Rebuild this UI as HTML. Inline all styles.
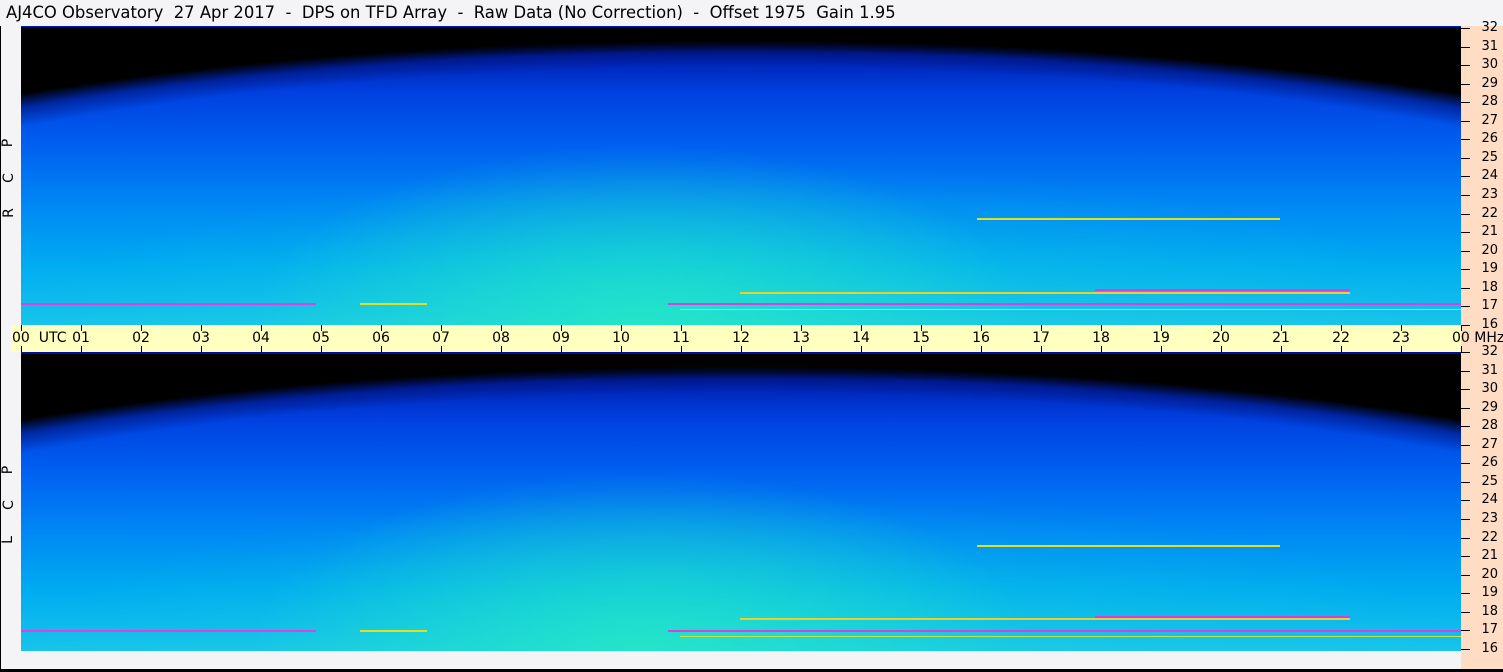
<!DOCTYPE html>
<html><head><meta charset="utf-8"><style>
body{margin:0;width:1503px;height:672px;overflow:hidden;background:#f4f4f6;font-family:"DejaVu Sans","Liberation Sans",sans-serif;position:relative}
.t{position:absolute;left:6px;top:3px;font-size:16.4px;color:#000;white-space:pre}
.p{position:absolute;left:21px;width:1440px;height:299px;
background:
radial-gradient(ellipse 520px 240px at 620px 100%, rgba(40,240,190,.7), transparent 75%),
radial-gradient(ellipse 900px 200px at 720px 100%, rgba(30,220,210,.4), transparent 80%),
radial-gradient(ellipse 1300px 300px at 720px 100%, transparent 86%, rgba(0,20,120,.6) 91%, #000 95%),
linear-gradient(to bottom,#000 0,#000 4%,#0020b0 10%,#0040e0 22%,#0060f0 40%,#0088f4 60%,#00acf0 80%,#18c4ea 100%);}
.r{position:absolute;left:1461px;top:26px;width:42px;height:644px;background:#ffdcc4}
.band{position:absolute;left:11px;top:325px;width:1450px;height:27px;background:#ffffc0}
.ln{position:absolute;height:2px}
.fl{position:absolute;left:1474px;font-size:13px;line-height:14px;width:24px;text-align:right}
.ft{position:absolute;left:1461px;width:9px;height:1px;background:#000}
.tl{position:absolute;top:330px;font-size:14px;line-height:16px;width:30px;text-align:center;margin-left:-15px;white-space:nowrap}
.tt{position:absolute;width:1px;height:6px;background:#000}
.side{position:absolute;left:4px;font-size:14px;line-height:14px;transform:rotate(-90deg)}
.bord{position:absolute;left:0;top:669px;width:1503px;height:3px;background:#000}
</style></head><body>
<div class="t">AJ4CO Observatory  27 Apr 2017  -  DPS on TFD Array  -  Raw Data (No Correction)  -  Offset 1975  Gain 1.95</div>
<div class="r"></div>
<div class="p" style="top:26px"></div>
<div class="p" style="top:352px"></div>
<div class="band"></div>
<div style="position:absolute;left:21px;top:352px;width:1440px;height:2px;background:#0010a0"></div>
<div style="position:absolute;left:21px;top:26px;width:1440px;height:1px;background:#0020c0"></div>
<div class="ln" style="left:21px;top:303px;width:295px;background:#e040e0"></div>
<div class="ln" style="left:360px;top:303px;width:67px;background:#e0e020"></div>
<div class="ln" style="left:668px;top:303px;width:793px;background:#d840e0"></div>
<div class="ln" style="left:740px;top:292px;width:610px;background:#e8d030"></div>
<div class="ln" style="left:1095px;top:289px;width:255px;background:#d040e8"></div>
<div class="ln" style="left:977px;top:218px;width:303px;background:#e0e020"></div>
<div class="ln" style="left:680px;top:309px;width:781px;background:#c8e040;height:1px"></div>
<div class="ln" style="left:21px;top:630px;width:295px;background:#e040e0"></div>
<div class="ln" style="left:360px;top:630px;width:67px;background:#e0e020"></div>
<div class="ln" style="left:668px;top:630px;width:793px;background:#d840e0"></div>
<div class="ln" style="left:740px;top:618px;width:610px;background:#e8d030"></div>
<div class="ln" style="left:1095px;top:616px;width:255px;background:#d040e8"></div>
<div class="ln" style="left:977px;top:545px;width:303px;background:#e0e020"></div>
<div class="ln" style="left:680px;top:636px;width:781px;background:#c8e040;height:1px"></div>
<div class="side" style="top:136px">P</div><div class="side" style="top:171px">C</div><div class="side" style="top:206px">R</div>
<div class="side" style="top:463px">P</div><div class="side" style="top:498px">C</div><div class="side" style="top:533px">L</div>
<div id="ax"></div>
<div class="bord"></div>
<div style="position:absolute;left:0;top:26px;width:1px;height:646px;background:#000"></div>
<script>
var h='';
for(var k=0;k<2;k++){var y0=k?352:28;
for(var f=32;f>=16;f--){var y=y0+(32-f)*18.56;if(f==16&&!k)y=325;
h+='<div class="ft" style="top:'+Math.round(y)+'px"></div><div class="fl" style="top:'+Math.round(y-7)+'px">'+f+'</div>';}}
for(var i=0;i<=24;i++){var x=21+60*i;var s=(i%24<10?'0':'')+(i%24);
h+='<div class="tt" style="left:'+x+'px;top:325px"></div><div class="tt" style="left:'+x+'px;top:346px"></div>';
if(i==0)h+='<div class="tl" style="left:'+x+'px;width:60px;margin-left:-9px;text-align:left">00&nbsp;&nbsp;UTC</div>';
else if(i==24)h+='<div class="tl" style="left:'+x+'px;width:50px;text-align:left;margin-left:-9px">00 MHz</div>';
else h+='<div class="tl" style="left:'+x+'px">'+s+'</div>';}
document.getElementById('ax').innerHTML=h;
</script>
</body></html>
